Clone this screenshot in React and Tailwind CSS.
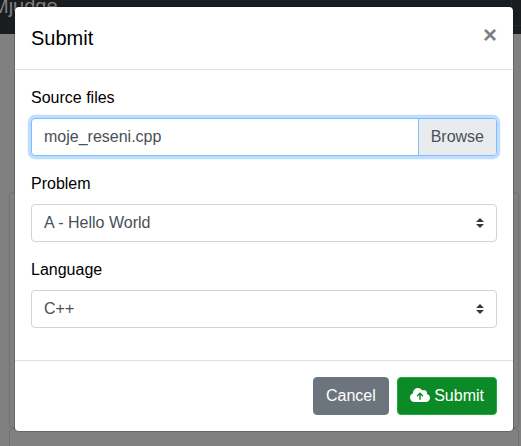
import { FaCloudArrowUp } from "react-icons/fa6";

function SelectField({ label, value }) {
  return (
    <div className="mb-4">
      <label className="mb-2 block">{label}</label>
      <div className="flex h-[38px] items-center justify-between rounded border border-[#ced4da] bg-white pr-3 pl-3 text-[#495057]">
        <span>{value}</span>
        <svg className="h-[10px] w-2" viewBox="0 0 4 5">
          <path fill="#343a40" d="M2 0L0 2h4zm0 5L0 3h4z" />
        </svg>
      </div>
    </div>
  );
}

function Modal() {
  return (
    <div className="absolute top-[6px] left-[14px] flex w-[500px] flex-col rounded-[4.8px] border border-black/20 bg-white bg-clip-padding text-black">
      <div className="flex items-start justify-between border-b border-[#dee2e6] p-4">
        <h5 className="text-xl leading-[30px] font-normal">Submit</h5>
        <button className="-m-4 p-4 text-2xl leading-none font-bold text-black opacity-50">×</button>
      </div>
      <div className="p-4">
        <div className="mb-4">
          <label className="mb-2 block">Source files</label>
          <div className="flex h-[38px] overflow-hidden rounded border border-[#80bdff] bg-white text-[#495057] shadow-[0_0_0_3.2px_rgba(0,123,255,0.25)]">
            <span className="flex-1 px-3 py-1.5">moje_reseni.cpp</span>
            <span className="border-l border-[#80bdff] bg-[#e9ecef] px-3 py-1.5">Browse</span>
          </div>
        </div>
        <SelectField label="Problem" value="A - Hello World" />
        <SelectField label="Language" value="C++" />
      </div>
      <div className="flex justify-end gap-2 border-t border-[#dee2e6] p-4">
        <button className="rounded border border-[#6c757d] bg-[#6c757d] px-3 py-1.5 text-white">Cancel</button>
        <button className="rounded border border-[#28a745] bg-[#0b8a27] px-3 py-1.5 text-white">
          <FaCloudArrowUp className="inline h-4 w-5 align-[-2px]" /> Submit
        </button>
      </div>
    </div>
  );
}

export default function App() {
  return (
    <div className="relative h-[446px] w-[521px] overflow-hidden bg-[#808080] font-['Liberation_Sans',Arial,sans-serif] text-base leading-6">
      <div className="flex h-[34px] items-start justify-between bg-[#1a1d20]">
        <span className="-mt-[9px] -ml-2 text-xl leading-[30px] text-[#808080]">Mjudge</span>
        <div className="-mt-4 -mr-9 h-[42px] w-[46px] rounded border border-[#25282b]" />
      </div>
      <div className="mt-[158px] mr-[2px] ml-[9px] h-[236px] rounded border border-[#707070]" />
      <div className="mr-[2px] ml-[9px] h-10 rounded border border-[#707070]" />
      <Modal />
    </div>
  );
}
